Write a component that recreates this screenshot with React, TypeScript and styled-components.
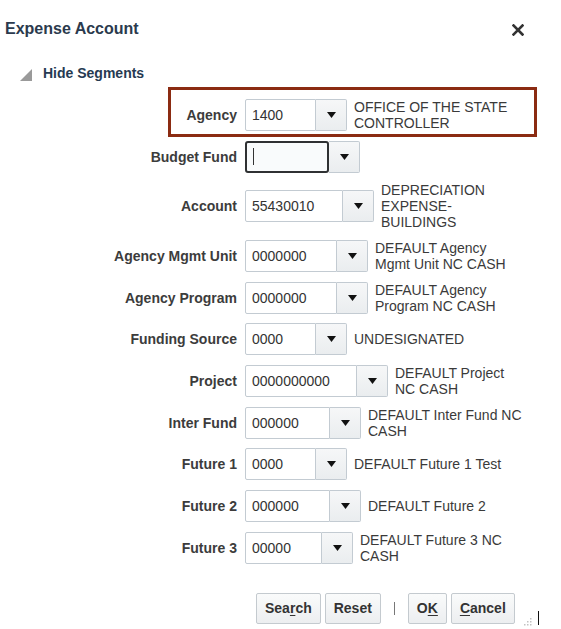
import React from "react";
import styled, { createGlobalStyle } from "styled-components";

type Segment = {
  label: string;
  value: string;
  width: number;
  desc: string[];
  focused?: boolean;
};

const SEGMENTS: Segment[] = [
  { label: "Agency", value: "1400", width: 71, desc: ["OFFICE OF THE STATE", "CONTROLLER"] },
  { label: "Budget Fund", value: "", width: 84, desc: [], focused: true },
  { label: "Account", value: "55430010", width: 98, desc: ["DEPRECIATION", "EXPENSE-", "BUILDINGS"] },
  { label: "Agency Mgmt Unit", value: "0000000", width: 92, desc: ["DEFAULT Agency", "Mgmt Unit NC CASH"] },
  { label: "Agency Program", value: "0000000", width: 92, desc: ["DEFAULT Agency", "Program NC CASH"] },
  { label: "Funding Source", value: "0000", width: 71, desc: ["UNDESIGNATED"] },
  { label: "Project", value: "0000000000", width: 112, desc: ["DEFAULT Project", "NC CASH"] },
  { label: "Inter Fund", value: "000000", width: 85, desc: ["DEFAULT Inter Fund NC", "CASH"] },
  { label: "Future 1", value: "0000", width: 71, desc: ["DEFAULT Future 1 Test"] },
  { label: "Future 2", value: "000000", width: 85, desc: ["DEFAULT Future 2"] },
  { label: "Future 3", value: "00000", width: 77, desc: ["DEFAULT Future 3 NC", "CASH"] },
];

const GlobalStyle = createGlobalStyle`
  body {
    margin: 0;
    background: #ffffff;
    font-family: "Liberation Sans", Arial, sans-serif;
  }
`;

const Dialog = styled.div`
  position: relative;
  width: 561px;
  height: 629px;
  background: #ffffff;
  overflow: hidden;
`;

const Header = styled.div`
  display: flex;
  justify-content: space-between;
  align-items: center;
  padding: 19px 37px 0 5px;
`;

const Title = styled.div`
  font-size: 16px;
  line-height: 20px;
  font-weight: 700;
  color: #2b3a4d;
`;

const CloseButton = styled.div`
  display: flex;
  width: 12px;
  height: 12px;
  margin-top: 2px;
`;

const Disclosure = styled.div`
  display: flex;
  align-items: flex-end;
  gap: 11px;
  margin-top: 26px;
  padding-left: 20px;
`;

const DisclosureText = styled.span`
  font-size: 14px;
  line-height: 16px;
  font-weight: 700;
  color: #263a52;
`;

const Form = styled.div`
  display: flex;
  flex-direction: column;
  margin-top: 13.15px;
`;

const Row = styled.div`
  display: flex;
  align-items: center;
  padding: 4.85px 0;
`;

const Label = styled.label`
  width: 237px;
  flex: none;
  text-align: right;
  font-size: 14px;
  font-weight: 700;
  color: #3c3c3c;
`;

const Combo = styled.div`
  display: flex;
  flex: none;
  height: 32px;
  margin-left: 8px;
`;

const Field = styled.div<{ $w: number; $focused?: boolean }>`
  box-sizing: border-box;
  display: flex;
  align-items: center;
  width: ${(p) => p.$w}px;
  height: 32px;
  padding-left: ${(p) => (p.$focused ? 5 : 6)}px;
  border: ${(p) => (p.$focused ? "2px solid #2f3133" : "1px solid #c3cbd2")};
  border-radius: ${(p) => (p.$focused ? "3px" : "2px 0 0 2px")};
  background: ${(p) => (p.$focused ? "#f9fbfc" : "#ffffff")};
  font-size: 14px;
  color: #333333;
`;

const Caret = styled.span`
  display: block;
  width: 1px;
  height: 17px;
  margin-left: 1px;
  background: #333333;
`;

const DropButton = styled.div`
  box-sizing: border-box;
  display: flex;
  align-items: center;
  justify-content: center;
  width: 31px;
  height: 32px;
  border: 1px solid #c3cbd2;
  border-left: none;
  border-radius: 0 2px 2px 0;
  background: linear-gradient(#f6f7f8, #eaedef);
`;

const Desc = styled.div`
  margin-left: 7px;
  font-size: 14px;
  line-height: 16px;
  color: #3a3a3a;
`;

const Highlight = styled.div`
  position: absolute;
  left: 168px;
  top: 87px;
  width: 369px;
  height: 50px;
  box-sizing: border-box;
  border: 3px solid #8b2b12;
  pointer-events: none;
`;

const Footer = styled.div`
  display: flex;
  align-items: center;
  margin-top: 24px;
  padding-left: 256px;
`;

const ActionButton = styled.button`
  box-sizing: border-box;
  height: 31px;
  min-width: 39px;
  padding: 0 8px;
  margin-right: 4px;
  border: 1px solid #c4cacf;
  border-radius: 2px;
  background: linear-gradient(#fafbfb, #eceef0);
  font-family: "Liberation Sans", Arial, sans-serif;
  font-size: 14px;
  font-weight: 700;
  color: #333333;
  cursor: pointer;

  u {
    text-decoration-thickness: 1px;
    text-underline-offset: 2px;
  }
`;

const Separator = styled.span`
  display: block;
  width: 1px;
  height: 13px;
  margin: 0 13px 0 9px;
  background: #777777;
`;

const Grip = styled.div`
  display: flex;
  align-self: flex-end;
  margin-left: 5px;
  margin-bottom: -2px;
`;

const TextCursor = styled.span`
  display: block;
  align-self: flex-end;
  width: 1px;
  height: 14px;
  margin-left: 6px;
  margin-bottom: -1px;
  background: #111111;
`;

const ArrowDown = () => (
  <svg width="9" height="6" viewBox="0 0 9 6">
    <path d="M0 0 L9 0 L4.5 6 Z" fill="#111" />
  </svg>
);

const CloseIcon = () => (
  <svg width="12" height="12" viewBox="0 0 12 12">
    <path d="M1.5 1.5 L10.5 10.5 M10.5 1.5 L1.5 10.5" stroke="#333" strokeWidth="2.6" strokeLinecap="square" />
  </svg>
);

const CollapseIcon = () => (
  <svg width="12" height="12" viewBox="0 0 12 12">
    <path d="M12 0 L12 12 L0 12 Z" fill="#9a9a9a" />
  </svg>
);

const GripIcon = () => (
  <svg width="8" height="8" viewBox="0 0 8 8">
    <g fill="#c2c2c2">
      <rect x="6" y="0" width="1.5" height="1.5" />
      <rect x="3" y="3" width="1.5" height="1.5" />
      <rect x="6" y="3" width="1.5" height="1.5" />
      <rect x="0" y="6" width="1.5" height="1.5" />
      <rect x="3" y="6" width="1.5" height="1.5" />
      <rect x="6" y="6" width="1.5" height="1.5" />
    </g>
  </svg>
);

const SegmentRow = ({ seg }: { seg: Segment }) => (
  <Row>
    <Label>{seg.label}</Label>
    <Combo>
      <Field $w={seg.width} $focused={seg.focused}>
        {seg.focused ? <Caret /> : seg.value}
      </Field>
      <DropButton>
        <ArrowDown />
      </DropButton>
    </Combo>
    {seg.desc.length > 0 && (
      <Desc>
        {seg.desc.map((line, i) => (
          <div key={i}>{line}</div>
        ))}
      </Desc>
    )}
  </Row>
);

export default function App() {
  return (
    <>
      <GlobalStyle />
      <Dialog>
        <Header>
          <Title>Expense Account</Title>
          <CloseButton>
            <CloseIcon />
          </CloseButton>
        </Header>
        <Disclosure>
          <CollapseIcon />
          <DisclosureText>Hide Segments</DisclosureText>
        </Disclosure>
        <Form>
          {SEGMENTS.map((seg) => (
            <SegmentRow key={seg.label} seg={seg} />
          ))}
        </Form>
        <Footer>
          <ActionButton>
            Sea<u>r</u>ch
          </ActionButton>
          <ActionButton>Reset</ActionButton>
          <Separator />
          <ActionButton>
            O<u>K</u>
          </ActionButton>
          <ActionButton>
            <u>C</u>ancel
          </ActionButton>
          <Grip>
            <GripIcon />
          </Grip>
          <TextCursor />
        </Footer>
        <Highlight />
      </Dialog>
    </>
  );
}
